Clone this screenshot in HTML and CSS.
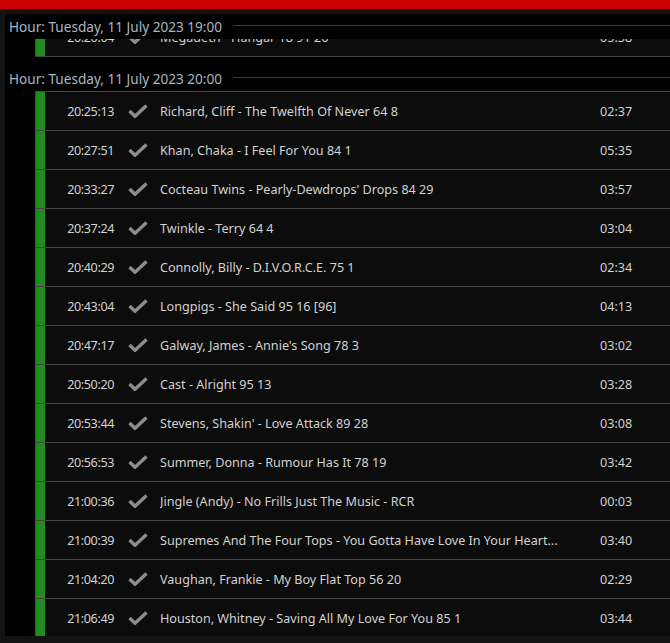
FILE: index.html
```html
<!DOCTYPE html>
<html lang="en">
<head>
  <meta charset="UTF-8">
  <title>Playout Log</title>
  <link rel="stylesheet" href="styles.css">
</head>
<body>

  <div class="topbar"></div>

  <div class="panel">
    <div class="log">

      <div class="hour">
        <span class="hour-label">Hour: Tuesday, 11 July 2023 19:00</span>
        <span class="hour-rule"></span>
      </div>
      <div class="group group-scrolled">
        <div class="item">
          <span class="status"></span>
          <span class="time">20:20:04</span>
          <svg class="tick" viewBox="0 0 20 14"><path d="M1.5 7 L7 12.3 L18.5 1.5"/></svg>
          <span class="title">Megadeth - Hangar 18 91 26</span>
          <span class="length">05:38</span>
        </div>
      </div>

      <div class="hour">
        <span class="hour-label">Hour: Tuesday, 11 July 2023 20:00</span>
        <span class="hour-rule"></span>
      </div>
      <div class="group" id="hour20"></div>

    </div>
  </div>

  <script>
    const items = [
      ["20:25:13", "Richard, Cliff - The Twelfth Of Never 64 8", "02:37"],
      ["20:27:51", "Khan, Chaka - I Feel For You 84 1", "05:35"],
      ["20:33:27", "Cocteau Twins - Pearly-Dewdrops' Drops 84 29", "03:57"],
      ["20:37:24", "Twinkle - Terry 64 4", "03:04"],
      ["20:40:29", "Connolly, Billy - D.I.V.O.R.C.E. 75 1", "02:34"],
      ["20:43:04", "Longpigs - She Said 95 16 [96]", "04:13"],
      ["20:47:17", "Galway, James - Annie's Song 78 3", "03:02"],
      ["20:50:20", "Cast - Alright 95 13", "03:28"],
      ["20:53:44", "Stevens, Shakin' - Love Attack 89 28", "03:08"],
      ["20:56:53", "Summer, Donna - Rumour Has It 78 19", "03:42"],
      ["21:00:36", "Jingle (Andy) - No Frills Just The Music - RCR", "00:03"],
      ["21:00:39", "Supremes And The Four Tops - You Gotta Have Love In Your Heart...", "03:40"],
      ["21:04:20", "Vaughan, Frankie - My Boy Flat Top 56 20", "02:29"],
      ["21:06:49", "Houston, Whitney - Saving All My Love For You 85 1", "03:44"]
    ];

    const group = document.getElementById("hour20");
    for (const [time, title, length] of items) {
      const row = document.createElement("div");
      row.className = "item";
      row.innerHTML =
        '<span class="status"></span>' +
        '<span class="time">' + time + '</span>' +
        '<svg class="tick" viewBox="0 0 20 14"><path d="M1.5 7 L7 12.3 L18.5 1.5"/></svg>' +
        '<span class="title"></span>' +
        '<span class="length">' + length + '</span>';
      row.querySelector(".title").textContent = title;
      group.appendChild(row);
    }
  </script>
</body>
</html>
```

FILE: styles.css
```css
body {
  margin: 0;
  background-color: #111111;
  font-family: 'Noto Sans', 'Open Sans', sans-serif;
  color: #d2d2d2;
  overflow: hidden;
}
.topbar {
  height: 9px;
  background-color: #cc0000;
}
.panel {
  height: 634px;
  padding: 5px 0 0 5px;
  background-color: #131313;
}
.log {
  height: 622px;
  background-color: #000;
  overflow: hidden;
}

/* hour headings sit on top of the rows scrolled under them */
.hour {
  position: relative;
  z-index: 1;
  display: flex;
  align-items: center;
  height: 25px;
  padding-left: 4px;
  background-color: #000;
}
.hour-label {
  font-size: 13.6px;
  color: #a8b6c4;
  white-space: nowrap;
}
.hour-rule {
  flex: 1;
  height: 1px;
  margin: 0 0 2px 11px;
  background-color: #3a3a3a;
}
.group {
  margin-left: 30px;
  border-left: 1px solid #454545;
  border-bottom: 1px solid #454545;
  background-color: #0c0c0c;
}
.group-scrolled {
  margin-top: -22px;
  margin-bottom: 9px;
}

.item {
  display: flex;
  align-items: center;
  height: 38px;
  border-top: 1px solid #454545;
  font-size: 12.6px;
}
.status {
  align-self: stretch;
  width: 9px;
  background-color: #228b22;
}
.time {
  width: 69px;
  text-align: right;
  letter-spacing: -0.4px;
}
.tick {
  width: 20px;
  height: 14px;
  margin-left: 14px;
  fill: none;
  stroke: #8c8c8c;
  stroke-width: 3.4;
}
.title {
  width: 414px;
  margin-left: 12px;
  white-space: nowrap;
  overflow: hidden;
  text-overflow: ellipsis;
}
.length {
  margin-left: 26px;
}
```
